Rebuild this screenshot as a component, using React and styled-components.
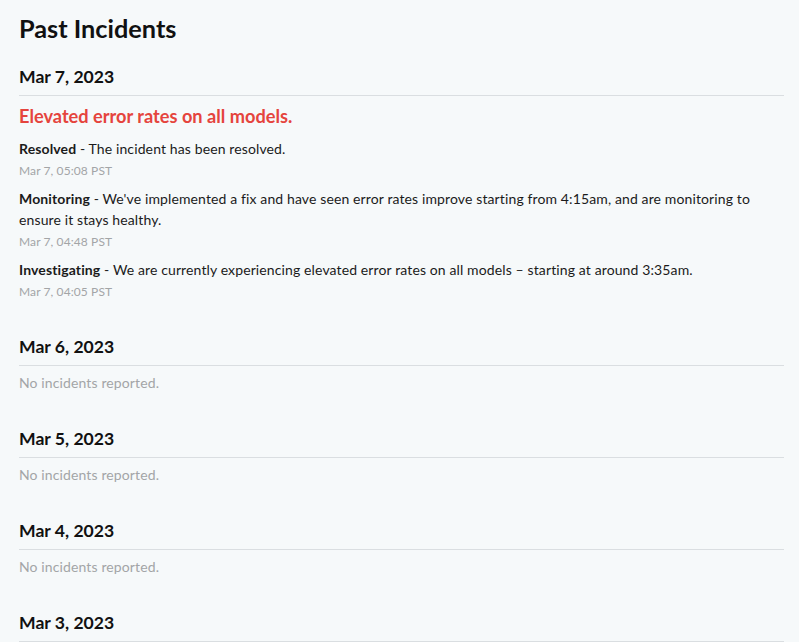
import React from "react";
import styled, { createGlobalStyle } from "styled-components";

const GlobalStyle = createGlobalStyle`
  html, body {
    margin: 0;
    padding: 0;
    background: #f6f9fa;
  }
  body {
    font-family: "Lato", "Noto Sans", sans-serif;
    color: #1b1b1b;
    -webkit-font-smoothing: antialiased;
  }
`;

const Page = styled.main`
  padding: 12px 15px 0 19px;
  width: 765px;
  box-sizing: content-box;
`;

const Title = styled.h1`
  margin: 0;
  font-size: 25.3px;
  line-height: 32px;
  font-weight: 700;
  color: #111;
`;

const Day = styled.section`
  margin-top: ${(p) => (p.$first ? "21px" : "34px")};
`;

const DayHeader = styled.h2`
  margin: 0;
  font-size: 17.6px;
  line-height: 24px;
  font-weight: 700;
  color: #111;
  padding-bottom: 6px;
  border-bottom: 1px solid #dadee1;
`;

const Incident = styled.article`
  padding-bottom: 1px;
`;

const IncidentTitle = styled.h3`
  margin: 8px 0 0;
  font-size: 18.2px;
  line-height: 24px;
  font-weight: 700;
  color: #e5443d;
`;

const Update = styled.div`
  margin-top: 9px;
  &:first-of-type {
    margin-top: 10px;
  }
`;

const UpdateBody = styled.p`
  margin: 0;
  font-size: 14px;
  line-height: 21px;
  letter-spacing: 0.12px;
  color: #1b1b1b;
`;

const Status = styled.strong`
  font-weight: 700;
`;

const Timestamp = styled.div`
  margin-top: 4px;
  font-size: 12px;
  line-height: 16px;
  letter-spacing: 0.1px;
  color: #a3a5a7;
`;

const Empty = styled.p`
  margin: 7px 0 0;
  font-size: 14px;
  line-height: 20px;
  letter-spacing: 0.12px;
  color: #a3a5a7;
`;

const days = [
  {
    date: "Mar 7, 2023",
    incidents: [
      {
        title: "Elevated error rates on all models.",
        updates: [
          {
            status: "Resolved",
            text: "The incident has been resolved.",
            time: "Mar 7, 05:08 PST",
          },
          {
            status: "Monitoring",
            text:
              "We've implemented a fix and have seen error rates improve starting from 4:15am, and are monitoring to ensure it stays healthy.",
            time: "Mar 7, 04:48 PST",
          },
          {
            status: "Investigating",
            text:
              "We are currently experiencing elevated error rates on all models – starting at around 3:35am.",
            time: "Mar 7, 04:05 PST",
          },
        ],
      },
    ],
  },
  { date: "Mar 6, 2023", incidents: [] },
  { date: "Mar 5, 2023", incidents: [] },
  { date: "Mar 4, 2023", incidents: [] },
  { date: "Mar 3, 2023", incidents: [] },
];

export default function App() {
  return (
    <>
      <GlobalStyle />
      <Page>
        <Title>Past Incidents</Title>
        {days.map((day, i) => (
          <Day key={day.date} $first={i === 0}>
            <DayHeader>{day.date}</DayHeader>
            {day.incidents.length === 0 ? (
              <Empty>No incidents reported.</Empty>
            ) : (
              day.incidents.map((inc) => (
                <Incident key={inc.title}>
                  <IncidentTitle>{inc.title}</IncidentTitle>
                  {inc.updates.map((u) => (
                    <Update key={u.status}>
                      <UpdateBody>
                        <Status>{u.status}</Status> - {u.text}
                      </UpdateBody>
                      <Timestamp>{u.time}</Timestamp>
                    </Update>
                  ))}
                </Incident>
              ))
            )}
          </Day>
        ))}
      </Page>
    </>
  );
}
